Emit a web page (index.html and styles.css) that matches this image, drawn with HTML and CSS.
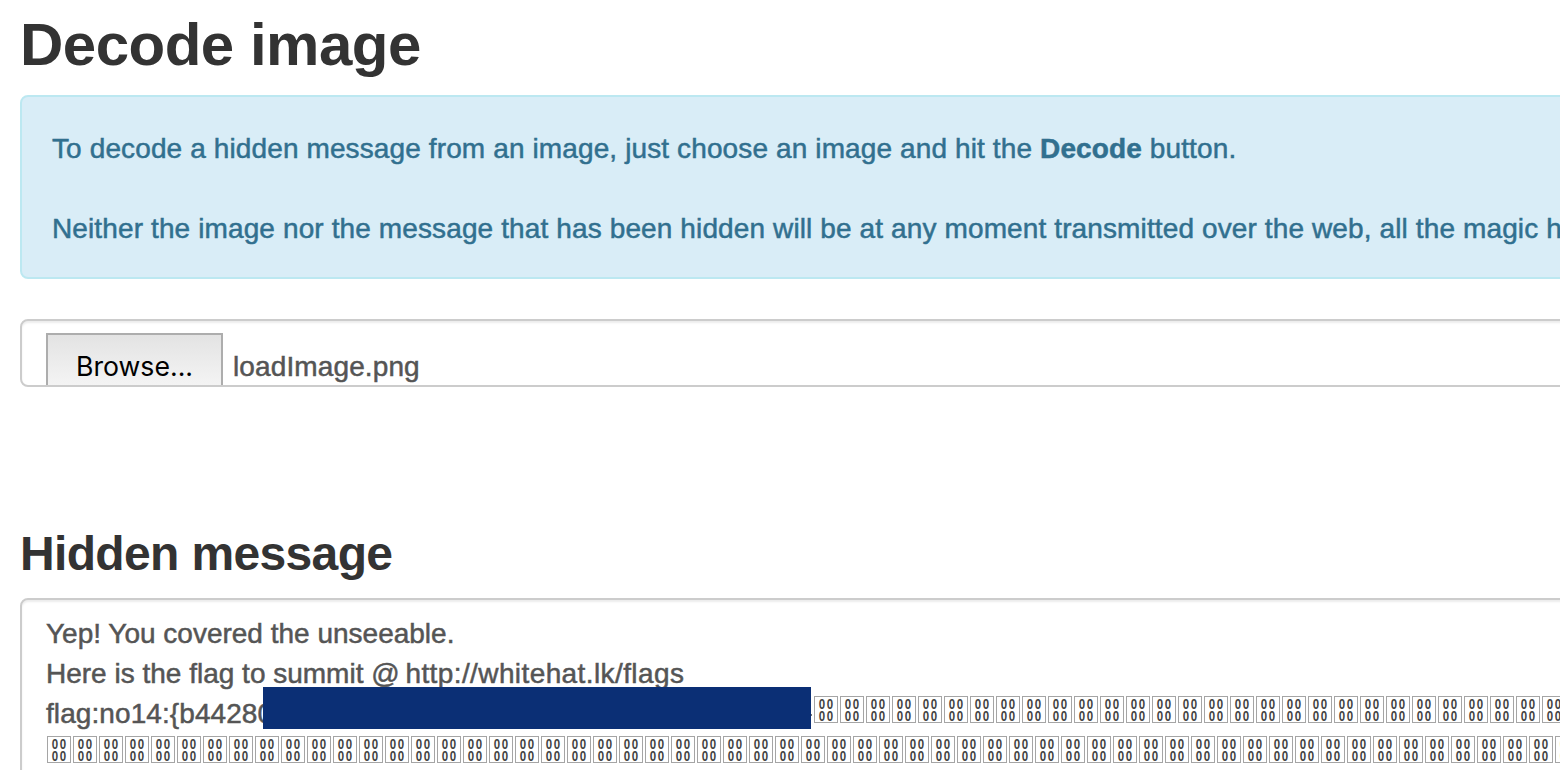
FILE: index.html
```html
<!DOCTYPE html>
<html lang="en">
<head>
<meta charset="utf-8">
<title>Decode image</title>
<link rel="stylesheet" href="styles.css">
</head>
<body>
<main class="page">
  <h1 class="title">Decode image</h1>
  <div class="alert">
    <p class="alert-line">To decode a hidden message from an image, just choose an image and hit the <strong>Decode</strong> button.</p>
    <p class="alert-line">Neither the image nor the message that has been hidden will be at any moment transmitted over the web, all the magic h</p>
  </div>
  <div class="file-field">
    <span class="browse">Browse...</span>
    <span class="file-name">loadImage.png</span>
  </div>
  <h2 class="subtitle">Hidden message</h2>
  <div class="message">
    <p class="line">Yep! You covered the unseeable.</p>
    <p class="line">Here is the flag to summit @ <span class="url">http://whitehat.lk/flags</span></p>
    <div class="line flag-line"><span class="flag">flag:no14:{b44280</span><span class="redaction"></span><span class="nulls" data-count="29"></span></div>
    <div class="line null-line"><span class="nulls" data-count="59"></span></div>
  </div>
</main>
<script src="script.js"></script>
</body>
</html>
```
FILE: styles.css
```css
* { box-sizing: border-box; }
body {
  margin: 0;
  width: 1560px;
  height: 770px;
  overflow: hidden;
  background: #fff;
  color: #555;
  font-family: "Liberation Sans", Arial, sans-serif;
  font-size: 28px;
  line-height: 40px;
}
p, h1, h2 { margin: 0; }
.page { padding: 12px 0 0 20px; height: 770px; overflow: hidden; }
.title {
  height: 83px;
  font-size: 60px;
  line-height: 66px;
  font-weight: 700;
  color: #333;
  letter-spacing: -0.5px;
}
.alert {
  width: 1600px;
  height: 184px;
  padding: 32px 30px 30px;
  border: 2px solid #bce8f1;
  border-radius: 8px;
  background: #d9edf7;
  color: #31708f;
  letter-spacing: 0.12px;
  white-space: nowrap;
  -webkit-text-stroke: 0.5px;
}
.alert-line + .alert-line { margin-top: 40px; }
.file-field {
  display: flex;
  width: 1600px;
  height: 68px;
  margin-top: 40px;
  padding: 12px 24px 0;
  border: 2px solid #ccc;
  border-radius: 8px;
  box-shadow: inset 0 2px 2px rgba(0, 0, 0, 0.075);
  overflow: hidden;
}
.browse {
  flex: none;
  width: 177px;
  height: 66px;
  border: 2px solid #adadad;
  background: linear-gradient(#e3e3e3, #f5f5f5 54px);
  color: #000;
  font-family: Inter, sans-serif;
  font-size: 26.67px;
  line-height: 62px;
  text-align: center;
}
.file-name { margin-left: 10px; line-height: 68px; letter-spacing: 0.12px; -webkit-text-stroke: 0.5px; }
.subtitle {
  height: 53px;
  margin-top: 140px;
  font-size: 48px;
  line-height: 53px;
  font-weight: 700;
  color: #333;
  letter-spacing: -0.65px;
}
.message {
  width: 1600px;
  height: 240px;
  margin-top: 18px;
  padding: 14px 24px 0;
  border: 2px solid #ccc;
  border-radius: 8px;
  box-shadow: inset 0 2px 2px rgba(0, 0, 0, 0.075);
}
.line { height: 40px; white-space: nowrap; -webkit-text-stroke: 0.5px; }
.url { margin-left: -2px; letter-spacing: 0.4px; }
.flag-line { display: flex; }
.flag { flex: none; width: 216.5px; letter-spacing: 0.08px; }
.redaction {
  position: relative;
  flex: none;
  width: 548px;
  height: 42px;
  margin-top: -7px;
  background: #0b2f75;
}
/* Visible tip of the closing brace. */
.redaction::after {
  content: "";
  position: absolute;
  left: 100%;
  top: 27px;
  width: 1.5px;
  height: 2px;
  background: #777;
}
.nulls { display: flex; gap: 2px; padding: 2px 0 0 3px; -webkit-text-stroke: 0; }
.null-line .nulls { padding-left: 1px; }
.null {
  flex: none;
  width: 24px;
  height: 27px;
  padding: 1px 0 0;
  border: 1px solid #a5a5a5;
  color: #444;
  font-size: 14px;
  font-weight: 700;
  line-height: 12px;
  text-align: center;
}
.null b { display: block; width: 22px; padding-left: 2px; letter-spacing: 2px; transform: scaleX(0.82); }
```
FILE: script.js
```js
// Fill each run with hex boxes for the U+0000 characters.
document.querySelectorAll('.nulls').forEach(function (run) {
  for (let i = 0; i < Number(run.dataset.count); i++) {
    const box = document.createElement('span');
    box.className = 'null';
    for (let r = 0; r < 2; r++) {
      const row = document.createElement('b');
      row.textContent = '00';
      box.appendChild(row);
    }
    run.appendChild(box);
  }
});
```
